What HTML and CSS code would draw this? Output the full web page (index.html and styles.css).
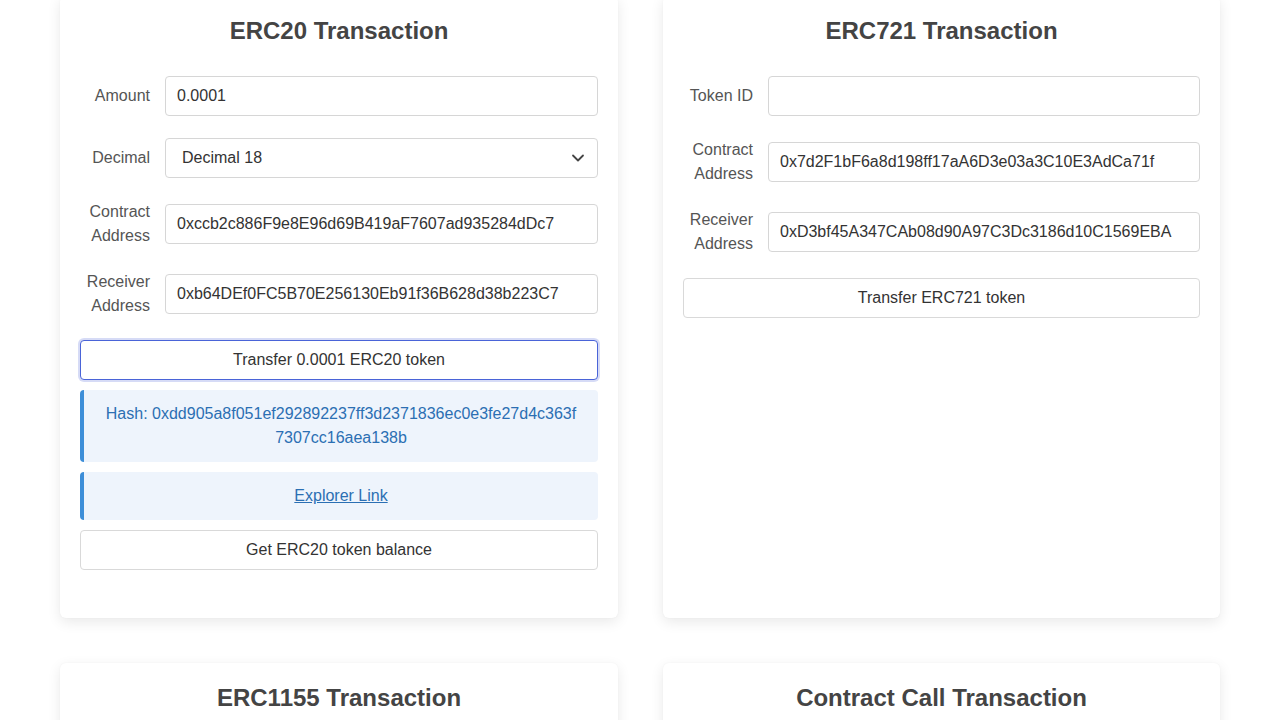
FILE: index.html
```html
<!DOCTYPE html>
<html lang="en">
<head>
<meta charset="utf-8">
<title>Transactions</title>
<link rel="stylesheet" href="styles.css">
</head>
<body>
<main class="grid">
  <section class="card">
    <h2 class="card-title">ERC20 Transaction</h2>
    <div class="row">
      <label class="label">Amount</label>
      <input class="field" type="text" value="0.0001">
    </div>
    <div class="row">
      <label class="label">Decimal</label>
      <div class="select">
        <span>Decimal 18</span>
        <svg class="chev" width="14" height="14" viewBox="0 0 14 14"><path d="M2 4.5 L7 9.5 L12 4.5" fill="none" stroke="#444" stroke-width="1.8" stroke-linecap="round" stroke-linejoin="round"/></svg>
      </div>
    </div>
    <div class="row">
      <label class="label">Contract Address</label>
      <input class="field" type="text" value="0xccb2c886F9e8E96d69B419aF7607ad935284dDc7">
    </div>
    <div class="row">
      <label class="label">Receiver Address</label>
      <input class="field" type="text" value="0xb64DEf0FC5B70E256130Eb91f36B628d38b223C7">
    </div>
    <button class="btn btn-focus">Transfer 0.0001 ERC20 token</button>
    <div class="notice">Hash: 0xdd905a8f051ef292892237ff3d2371836ec0e3fe27d4c363f<br>7307cc16aea138b</div>
    <div class="notice notice-link"><a href="#">Explorer Link</a></div>
    <button class="btn btn-last">Get ERC20 token balance</button>
  </section>

  <section class="card">
    <h2 class="card-title">ERC721 Transaction</h2>
    <div class="row">
      <label class="label">Token ID</label>
      <input class="field" type="text" value="">
    </div>
    <div class="row">
      <label class="label">Contract Address</label>
      <input class="field" type="text" value="0x7d2F1bF6a8d198ff17aA6D3e03a3C10E3AdCa71f">
    </div>
    <div class="row">
      <label class="label">Receiver Address</label>
      <input class="field" type="text" value="0xD3bf45A347CAb08d90A97C3Dc3186d10C1569EBA">
    </div>
    <button class="btn btn-last">Transfer ERC721 token</button>
  </section>

  <section class="card">
    <h2 class="card-title">ERC1155 Transaction</h2>
  </section>

  <section class="card">
    <h2 class="card-title">Contract Call Transaction</h2>
  </section>
</main>
</body>
</html>
```

FILE: styles.css
```css
* { box-sizing: border-box; }
html, body { margin: 0; padding: 0; background: #fff; }
body {
  font-family: "Liberation Sans", Arial, sans-serif;
  font-size: 16px;
  color: #333;
}
.grid {
  display: grid;
  grid-template-columns: 558px 557px;
  column-gap: 45px;
  row-gap: 45px;
  padding: 0 60px 40px;
  margin-top: -4px;
}
.card {
  background: #fff;
  border-radius: 6px;
  box-shadow: 0 4px 14px rgba(0, 0, 0, 0.09), 0 0 2px rgba(0,0,0,0.04);
  padding: 21px 20px 48px;
}
.card-title {
  margin: 0 0 31px;
  text-align: center;
  font-size: 24px;
  line-height: 28px;
  font-weight: bold;
  color: #444;
}
.row {
  display: flex;
  align-items: center;
  gap: 15px;
  margin-bottom: 22px;
}
.label {
  width: 70px;
  flex: 0 0 70px;
  text-align: right;
  line-height: 24px;
  color: #555;
}
.field, .select {
  flex: 1;
  height: 40px;
  border: 1px solid #d6d6d6;
  border-radius: 4px;
  padding: 0 11px;
  font-family: inherit;
  font-size: 16px;
  color: #333;
  background: #fff;
  min-width: 0;
}
.select {
  display: flex;
  align-items: center;
  justify-content: space-between;
  padding: 0 12px 0 16px;
}
.chev { display: block; }
.btn {
  display: block;
  width: 100%;
  height: 40px;
  border: 1px solid #d9d9d9;
  border-radius: 4px;
  background: #fff;
  font-family: inherit;
  font-size: 16px;
  color: #333;
  margin: 0 0 10px;
  padding: 0;
}
.btn-last { margin-bottom: 0; }
.btn-focus {
  border-color: #4a64d8;
  box-shadow: 0 0 0 2px rgba(90, 110, 220, 0.25);
}
.notice {
  background: #eef4fc;
  border-left: 4px solid #3d8ed8;
  border-radius: 4px;
  color: #2b6fb3;
  text-align: center;
  line-height: 24px;
  padding: 12px 16px;
  margin-bottom: 10px;
}
.notice a { color: #2b6fb3; text-decoration: underline; }
```
